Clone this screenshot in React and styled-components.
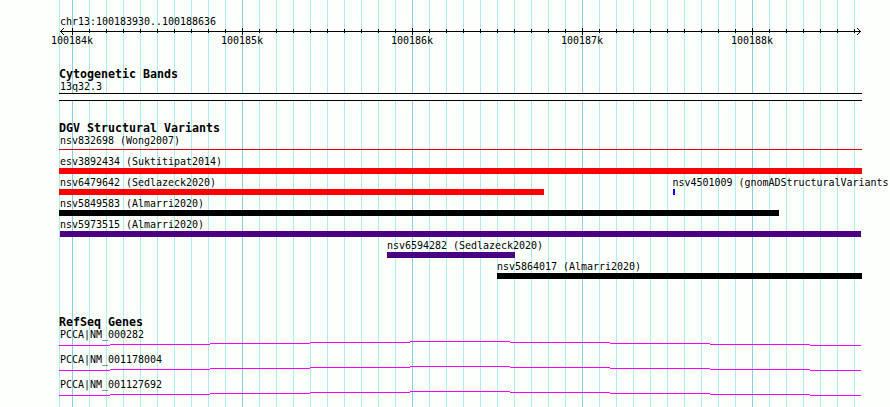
import React from 'react';
import styled, { createGlobalStyle } from 'styled-components';

const GlobalStyle = createGlobalStyle`
  body {
    margin: 0;
    background: #fdfffc;
  }
`

const Browser = styled.main`
  position: relative;
  box-sizing: border-box;
  width: 890px;
  height: 407px;
  padding: 15px 0 0 59px;
  overflow: hidden;
  background: #fdfffc;
  color: #000;
`

const GridLayer = styled.svg`
  position: absolute;
  top: 0;
  left: 0;
`

const Content = styled.div`
  position: relative;
`

const Label = styled.div`
  height: 13px;
  margin-left: ${props => props.$indent || 0}px;
  padding-left: 1px;
  font: 10px/13px 'DejaVu Sans Mono', monospace;
  letter-spacing: -0.02px;
  white-space: nowrap;
  transform: scaleY(1.1);
`

const Ruler = styled.svg`
  display: block;
  width: 803px;
  height: 7px;
`

const RulerLabels = styled.div`
  display: grid;
  grid-template-columns: repeat(5, 170px);
  margin: -1px 0 0 -9px;
`

const Track = styled.section`
  height: ${props => props.$height}px;
`

const Title = styled.h2`
  height: 12px;
  margin: 0;
  font: bold 11.63px/13px 'DejaVu Sans Mono', monospace;
  white-space: nowrap;
`

const Band = styled.div`
  box-sizing: border-box;
  width: 803px;
  height: 8px;
  border: solid #000;
  border-width: 1px 0;
  background: #fdfffc;
`

const Row = styled.div`
  display: grid;
  height: 21px;
`

const Feature = styled.div`
  grid-area: 1 / 1;
`

const Bar = styled.div`
  width: ${props => props.$width}px;
  height: ${props => props.$thin ? 1 : 6}px;
  margin: ${props => props.$thin ? 2 : 0}px 0 0 ${props => props.$start}px;
  background: ${props => props.$color};
`

const Gene = styled.div`
  height: 25px;
`

const Intron = styled.svg`
  display: block;
  width: 803px;
  height: 6px;
`

const gridLines = Array.from({ length: 47 }, (_, i) => 72 + i * 17);

const variants = [
  [{ name: 'nsv832698 (Wong2007)', start: 0, width: 803, color: '#e00010', thin: true }],
  [{ name: 'esv3892434 (Suktitipat2014)', start: 0, width: 803, color: '#ff0000' }],
  [
    { name: 'nsv6479642 (Sedlazeck2020)', start: 0, width: 485, color: '#ff0000' },
    { name: 'nsv4501009 (gnomADStructuralVariants', start: 614, indent: 612.5, width: 2, color: '#0000ff' },
  ],
  [{ name: 'nsv5849583 (Almarri2020)', start: 0, width: 720, color: '#000' }],
  [{ name: 'nsv5973515 (Almarri2020)', start: 1, width: 801, color: '#4b0082' }],
  [{ name: 'nsv6594282 (Sedlazeck2020)', start: 328, indent: 327, width: 128, color: '#4b0082' }],
  [{ name: 'nsv5864017 (Almarri2020)', start: 438, indent: 437, width: 365, color: '#000' }],
];

const genes = ['PCCA|NM_000282', 'PCCA|NM_001178004', 'PCCA|NM_001127692'];

// each step is [start, end, y]
const intronSteps = [
  [0, 51, 4], [51, 151, 3], [151, 251, 2], [251, 351, 1], [351, 451, 0],
  [451, 551, 1], [551, 651, 2], [651, 751, 3], [751, 802, 4],
];

function GridLines() {
  return (
    <GridLayer width="890" height="407" shapeRendering="crispEdges">
      <rect x="59" width="1" height="407" fill="#afeeee" />
      {gridLines.map((x, i) => (
        <rect key={x} x={x} width="1" height="407" fill={i % 10 ? '#afeeee' : '#87ceeb'} />
      ))}
    </GridLayer>
  );
}

function Scale() {
  return (
    <>
      <Ruler viewBox="0 0 803 7" shapeRendering="crispEdges">
        <rect x="1" y="3" width="801" height="1" />
        {gridLines.map((x, i) => (
          <rect key={x} x={x - 59} y={i % 10 ? 1 : 0} width="1" height={i % 10 ? 4 : 7} />
        ))}
        <path d="M2 2h1v1h-1zM3 1h1v1h-1zM4 0h1v1h-1zM2 4h1v1h-1zM3 5h1v1h-1zM4 6h1v1h-1z" />
        <path d="M800 2h1v1h-1zM799 1h1v1h-1zM798 0h1v1h-1zM800 4h1v1h-1zM799 5h1v1h-1zM798 6h1v1h-1z" />
      </Ruler>
      <RulerLabels>
        {[100184, 100185, 100186, 100187, 100188].map(n => <Label key={n}>{n}k</Label>)}
      </RulerLabels>
    </>
  );
}

export default function App() {
  return (
    <Browser>
      <GlobalStyle />
      <GridLines />
      <Content>
        <Track $height={53}>
          <Label>chr13:100183930..100188636</Label>
          <Scale />
        </Track>
        <Track $height={54}>
          <Title>Cytogenetic Bands</Title>
          <Label>13q32.3</Label>
          <Band />
        </Track>
        <Track $height={194}>
          <Title>DGV Structural Variants</Title>
          {variants.map(row => (
            <Row key={row[0].name}>
              {row.map(item => (
                <Feature key={item.name}>
                  <Label $indent={item.indent}>{item.name}</Label>
                  <Bar $start={item.start} $width={item.width} $color={item.color} $thin={item.thin} />
                </Feature>
              ))}
            </Row>
          ))}
        </Track>
        <Track $height={90}>
          <Title>RefSeq Genes</Title>
          {genes.map(name => (
            <Gene key={name}>
              <Label>{name}</Label>
              <Intron viewBox="0 0 803 6" shapeRendering="crispEdges">
                {intronSteps.map(([start, end, y]) => (
                  <rect key={start} x={start} y={y} width={end - start} height="1" fill="#ff00ff" />
                ))}
              </Intron>
            </Gene>
          ))}
        </Track>
      </Content>
    </Browser>
  );
};
